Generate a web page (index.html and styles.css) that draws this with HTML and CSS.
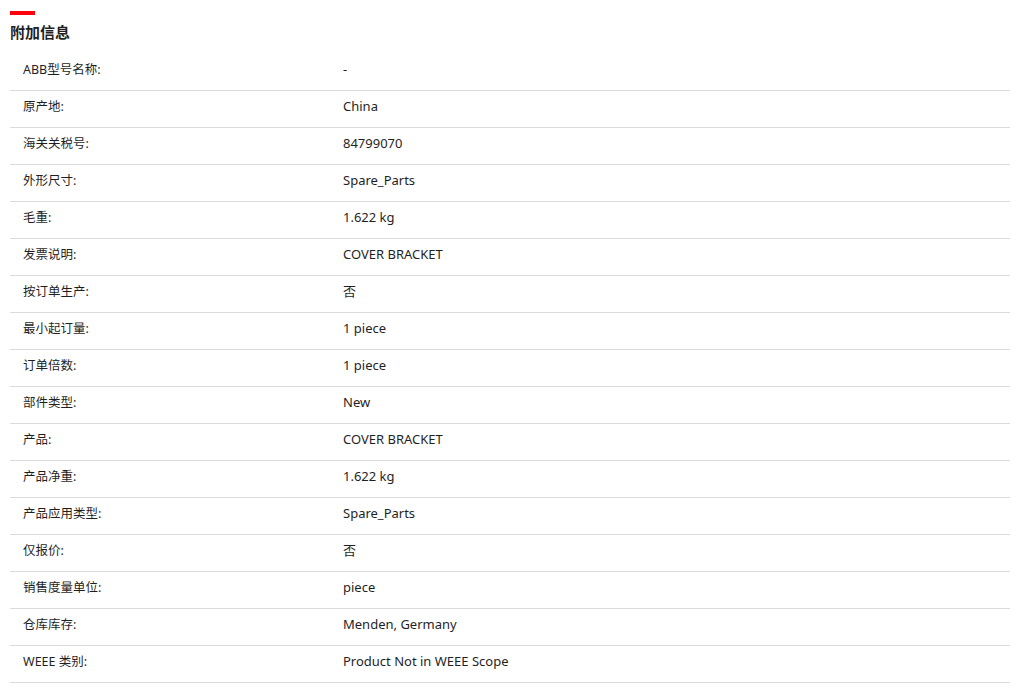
FILE: index.html
```html
<!DOCTYPE html>
<html lang="zh-CN">
<head>
<meta charset="utf-8">
<title>附加信息</title>
<link rel="stylesheet" href="styles.css">
</head>
<body>
<section class="info">
  <div class="accent"></div>
  <h2 class="title">附加信息</h2>
  <div class="table">
    <div class="row"><div class="label">ABB型号名称:</div><div class="value">-</div></div>
    <div class="row"><div class="label">原产地:</div><div class="value">China</div></div>
    <div class="row"><div class="label">海关关税号:</div><div class="value">84799070</div></div>
    <div class="row"><div class="label">外形尺寸:</div><div class="value">Spare_Parts</div></div>
    <div class="row"><div class="label">毛重:</div><div class="value">1.622 kg</div></div>
    <div class="row"><div class="label">发票说明:</div><div class="value">COVER BRACKET</div></div>
    <div class="row"><div class="label">按订单生产:</div><div class="value">否</div></div>
    <div class="row"><div class="label">最小起订量:</div><div class="value">1 piece</div></div>
    <div class="row"><div class="label">订单倍数:</div><div class="value">1 piece</div></div>
    <div class="row"><div class="label">部件类型:</div><div class="value">New</div></div>
    <div class="row"><div class="label">产品:</div><div class="value">COVER BRACKET</div></div>
    <div class="row"><div class="label">产品净重:</div><div class="value">1.622 kg</div></div>
    <div class="row"><div class="label">产品应用类型:</div><div class="value">Spare_Parts</div></div>
    <div class="row"><div class="label">仅报价:</div><div class="value">否</div></div>
    <div class="row"><div class="label">销售度量单位:</div><div class="value">piece</div></div>
    <div class="row"><div class="label">仓库库存:</div><div class="value">Menden, Germany</div></div>
    <div class="row"><div class="label">WEEE 类别:</div><div class="value">Product Not in WEEE Scope</div></div>
  </div>
</section>
</body>
</html>
```
FILE: styles.css
```css
html, body {
  margin: 0;
  padding: 0;
  background: #ffffff;
}
body {
  font-family: "Noto Sans", "Noto Sans CJK SC", sans-serif;
  color: #1f1f1f;
}
.info {
  width: 1000px;
  padding: 11px 10px 0 10px;
}
.accent {
  width: 25px;
  height: 4px;
  background: #ff000f;
}
.title {
  margin: 8px 0 0 0;
  font-size: 15px;
  line-height: 19px;
  font-weight: 700;
  color: #1f1f1f;
}
.table {
  margin-top: 12px;
}
.row {
  display: grid;
  grid-template-columns: 333px 1fr;
  height: 36px;
  border-bottom: 1px solid #dbdbdb;
  align-items: start;
  font-size: 13px;
  line-height: 18px;
}
.label {
  padding: 7px 0 0 13px;
  font-size: 12.5px;
}
.value {
  padding-top: 6px;
}
```
